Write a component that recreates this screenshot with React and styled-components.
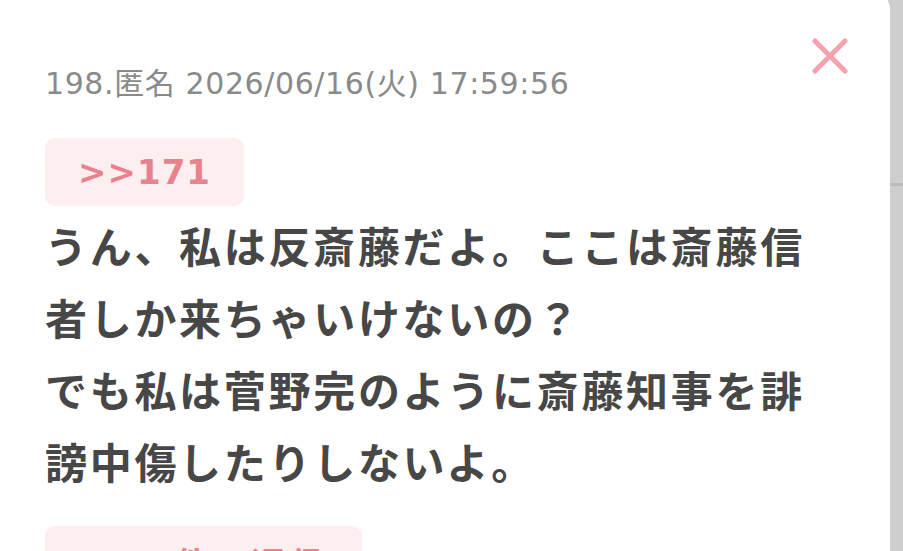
import styled, { createGlobalStyle } from 'styled-components'

const GlobalStyle = createGlobalStyle`
  html, body {
    margin: 0;
    padding: 0;
    overflow: hidden;
    background: #cecece;
  }
`

const Page = styled.div`
  display: flex;
  width: 903px;
  height: 551px;
  overflow: hidden;
  background: #cecece;
`

const Sheet = styled.div`
  box-sizing: border-box;
  width: 890px;
  margin-top: -12px;
  padding: 50px 42px 0 45px;
  background: #fff;
  border-top-right-radius: 22px;
`

// bande grise de droite, avec le trait d'un element derriere
const Strip = styled.div`
  flex: 1;
  background: linear-gradient(
    to bottom,
    #cecece 0,
    #cecece 183px,
    #bcbcbc 183px,
    #bcbcbc 186px,
    #cecece 186px
  );
`

const Header = styled.div`
  display: flex;
  justify-content: space-between;
  align-items: flex-start;
`

const Meta = styled.div`
  padding-top: 28px;
  font-family: 'DejaVu Sans', 'Noto Sans CJK JP', sans-serif;
  font-size: 30px;
  line-height: 36px;
  letter-spacing: 0.6px;
  color: #8a8a8a;
`

const CloseButton = styled.button`
  width: 36px;
  height: 36px;
  padding: 0;
  border: none;
  background: none;
  cursor: pointer;
  svg {
    display: block;
  }
`

const Badge = styled.div`
  display: inline-block;
  box-sizing: border-box;
  height: ${(props) => 68 + (props.$shift || 0)}px;
  margin-top: ${(props) => props.$top}px;
  padding: ${(props) => props.$shift || 0}px ${(props) => props.$pad}px 0;
  border-radius: 10px;
  background: #fdeef0;
  color: #e8838e;
  font-family: 'DejaVu Sans', 'Noto Sans CJK JP', sans-serif;
  font-weight: 700;
  font-size: 34px;
  line-height: 68px;
  letter-spacing: ${(props) => props.$spacing || 1}px;
`

const Count = styled.span`
  margin-right: 71px;
  letter-spacing: 0;
`

const Body = styled.p`
  max-width: 790px;
  margin: 3px 0 0;
  font-family: 'Noto Sans CJK JP', sans-serif;
  font-weight: 700;
  font-size: 42px;
  line-height: 72px;
  letter-spacing: 2.7px;
  color: #474747;
`

function CloseIcon() {
  return (
    <svg width="36" height="36" viewBox="0 0 36 36">
      <path
        d="M3 3 L33 33 M33 3 L3 33"
        stroke="#f2a3ab"
        strokeWidth="5"
        strokeLinecap="round"
      />
    </svg>
  )
}

export default function App() {
  return (
    <>
      <GlobalStyle />
      <Page>
        <Sheet>
          <Header>
            <Meta>198.匿名 2026/06/16(火) 17:59:56</Meta>
            <CloseButton aria-label="閉じる">
              <CloseIcon />
            </CloseButton>
          </Header>
          <Badge $top={36} $pad={33}>&gt;&gt;171</Badge>
          <Body>
            うん、私は反斎藤だよ。ここは斎藤信者しか来ちゃいけないの？
            <br />
            でも私は菅野完のように斎藤知事を誹謗中傷したりしないよ。
          </Body>
          <Badge $top={29} $pad={35} $spacing={4} $shift={5}>
            <Count>5</Count>件の返信
          </Badge>
        </Sheet>
        <Strip />
      </Page>
    </>
  )
}
